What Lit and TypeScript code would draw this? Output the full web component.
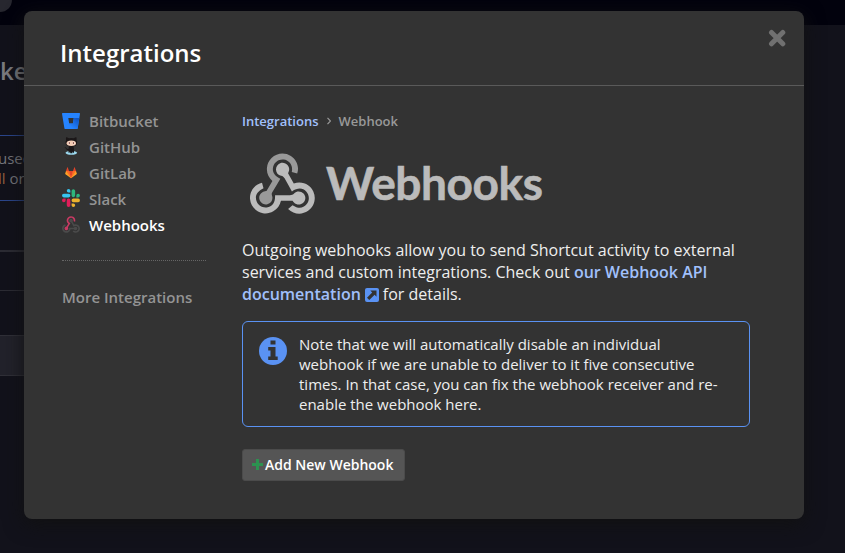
import { LitElement, html, css, svg } from "lit";
import { customElement, property } from "lit/decorators.js";

const hookTop =
  "M119.54 100.5C108.93 118.34 98.76 135.61 88.39 152.75C85.72 157.15 84.4 160.74 86.53 166.33C92.41 181.79 84.12 196.83 68.54 200.91C53.84 204.76 39.52 195.1 36.6 179.37C34.02 165.44 44.83 151.78 60.18 149.61C61.47 149.42 62.78 149.4 64.94 149.24L88.3 110.07C73.61 95.47 64.87 78.39 66.8 57.23C68.17 42.27 74.05 29.35 84.8 18.75C105.39 -1.54 136.81 -4.82 161.05 10.75C184.33 25.71 195 54.85 185.91 79.78L164.56 73.99C167.42 60.13 165.31 47.68 155.96 37.01C149.78 29.97 141.85 26.28 132.84 24.92C114.76 22.19 97.02 33.8 91.76 51.54C85.78 71.67 94.82 88.11 119.54 100.5Z";
const hookRight =
  "M149.84 79.41L172.43 119.25C210.45 107.48 239.11 128.53 249.4 151.06C261.82 178.28 253.33 210.52 228.93 227.31C203.89 244.55 172.23 241.61 150.04 219.46L167.45 204.9C189.36 219.09 208.53 218.42 222.75 201.61C234.89 187.28 234.62 165.9 222.14 151.86C207.73 135.67 188.43 135.17 165.1 150.72C155.43 133.55 145.58 116.52 136.21 99.23C133.05 93.4 129.56 90.02 122.44 88.79C110.55 86.73 102.87 76.51 102.41 65.07C101.96 53.75 108.62 43.52 119.04 39.54C129.36 35.59 141.48 38.78 148.42 47.55C154.09 54.72 155.9 62.79 152.91 71.64C152.08 74.1 151.01 76.49 149.84 79.41Z";
const hookLeft =
  "M167.71 187.21H121.94C117.55 205.25 108.07 219.82 91.75 229.09C79.05 236.29 65.37 238.73 50.81 236.38C24.01 232.05 2.09 207.92 .16 180.75C-2.03 149.96 19.13 122.6 47.33 116.45L53.2 137.72C27.32 150.92 18.36 167.55 25.61 188.35C31.98 206.66 50.09 216.69 69.75 212.81C89.83 208.85 99.96 192.16 98.72 165.38C117.76 165.38 136.81 165.18 155.85 165.48C163.28 165.59 169.02 164.82 174.62 158.27C183.84 147.48 200.81 148.46 210.74 158.64C220.89 169.05 220.4 185.8 209.66 195.77C199.3 205.39 182.93 204.87 173.24 194.51C171.25 192.37 169.68 189.84 167.71 187.21Z";

const hook = (top: string, right: string, left: string) => svg`
  <path fill=${top} d=${hookTop} />
  <path fill=${right} d=${hookRight} />
  <path fill=${left} d=${hookLeft} />`;

const icons = {
  bitbucket: html`<svg width="18" height="18" viewBox="0 -2 18 18">
    <defs><linearGradient id="bb" x1="1" y1=".2" x2=".4" y2=".8"><stop offset="0" stop-color="#0f55c4" /><stop offset="1" stop-color="#2684ff" /></linearGradient></defs>
    <path fill="#2684ff" fill-rule="evenodd" d="M.6 0H17.4Q18.1 0 18 .7L15.7 15.3Q15.6 16 14.9 16H3.200Q2.500 16 2.400 15.300L0 .7Q-.1 0 .6 0ZM6.300 5L7.200 10.500H10.900L11.800 5Z" />
    <path fill="url(#bb)" d="M17.300 5H11.800L10.900 10.500H7.200L2.700 15.800Q2.900 16 3.200 16H14.900Q15.600 16 15.700 15.300Z" />
  </svg>`,
  github: html`<svg width="18" height="18" viewBox="0 0 18 18">
    <ellipse cx="9.300" cy="15.800" rx="5.800" ry="2" fill="#9bd8ee" />
    <path fill="#1b1718" d="M4.300 0L7 1.200Q9.300.7 11.600 1.200L14.200 0Q15 1.800 14.500 3.300Q15.700 5 14.800 7.200Q13.900 9.300 11.400 9.500Q12.300 11 12 15.800H11L10.600 14.600L10.300 16.300H8.300L8 14.600L7.500 15.800H6.500V13.200Q4.500 13.300 3.600 11.300L2.500 10.400Q4.200 10.200 4.700 11.500Q5.500 12.200 6.600 11.800Q6.600 10.200 7.200 9.500Q4.700 9.200 3.900 7.200Q3 5 4.100 3.300Q3.600 1.800 4.300 0Z" />
    <ellipse cx="9.300" cy="6.200" rx="4.700" ry="2.700" fill="#f4cbb2" />
    <ellipse cx="7.200" cy="6" rx="1" ry="1.500" fill="#fff" /><ellipse cx="11.500" cy="6" rx="1" ry="1.500" fill="#fff" />
    <ellipse cx="7.300" cy="6.100" rx=".7" ry="1.100" fill="#8b4c40" /><ellipse cx="11.400" cy="6.100" rx=".7" ry="1.100" fill="#8b4c40" />
  </svg>`,
  gitlab: html`<svg width="18" height="18" viewBox="0 0 18 18">
    <path fill="#fca326" d="M4 8L3.200 10.500Q3.100 11 3.500 11.300L9 15.300L14.500 11.300Q14.900 11 14.800 10.500L14 8Z" />
    <path fill="#fc6d26" d="M4 8L9 15.300L14 8H11.100L9 14.300L6.900 8Z" />
    <path fill="#e24329" d="M4 8L5.300 4.300Q5.500 4 5.700 4.300L7 8H11L12.300 4.300Q12.500 4 12.700 4.300L14 8H11L9 15.300L7 8Z" />
  </svg>`,
  slack: html`<svg width="18" height="18" viewBox="0 0 54 54">
    <path fill="#36c5f0" d="M19.700 0a5.400 5.400 0 0 0 0 10.800h5.400V5.400A5.400 5.400 0 0 0 19.700 0m0 14.400H5.400a5.400 5.400 0 0 0 0 10.800h14.300a5.400 5.400 0 0 0 0-10.800" />
    <path fill="#2eb67d" d="M53.800 19.800a5.400 5.400 0 0 0-10.800 0v5.400h5.400a5.400 5.400 0 0 0 5.400-5.400m-14.400 0V5.400a5.400 5.400 0 0 0-10.700 0v14.400a5.400 5.400 0 0 0 10.700 0" />
    <path fill="#ecb22e" d="M34.100 54a5.400 5.400 0 0 0 0-10.800h-5.400v5.400a5.400 5.400 0 0 0 5.400 5.400m0-14.400h14.300a5.400 5.400 0 0 0 0-10.800H34.100a5.400 5.400 0 0 0 0 10.800" />
    <path fill="#e01e5a" d="M0 34.200a5.400 5.400 0 0 0 10.800 0v-5.400H5.400A5.400 5.400 0 0 0 0 34.200m14.300 0v14.400a5.400 5.400 0 0 0 10.800 0V34.200a5.400 5.400 0 0 0-10.800 0" />
  </svg>`,
  webhooks: html`<svg width="18" height="17" viewBox="0 0 256 239">${hook("#c73a63", "#4b4b4b", "#4b4b4b")}</svg>`,
};

type IconName = keyof typeof icons;

@customElement("integration-link")
class IntegrationLink extends LitElement {
  @property() icon: IconName = "slack";
  @property() label = "";
  @property({ type: Boolean }) current = false;
  static styles = css`
    :host { display: block; height: 26px; }
    .link { display: flex; align-items: center; height: 26px; gap: 9px; color: #949494; font-size: 15px; font-weight: 600; }
    .current { color: #fff; }
    .icon { display: flex; align-items: center; width: 18px; height: 18px; margin-top: -2px; }
    .icon svg { display: block; }
  `;
  render() {
    return html`<div class="link ${this.current ? "current" : ""}">
      <span class="icon">${icons[this.icon]}</span><span>${this.label}</span>
    </div>`;
  }
}

@customElement("app-root")
class AppRoot extends LitElement {
  static styles = css`
    :host { display: block; position: relative; width: 845px; height: 553px; overflow: hidden; background: #12121b; font-family: "Open Sans", sans-serif; color: #eee; }
    .page { display: flex; flex-direction: column; height: 553px; }
    .page > :not(.topbar) { width: 400px; }
    .topbar { height: 25px; flex: none; background: #02020d; }
    .avatar { width: 24px; height: 24px; margin: -12px 0 0 -12px; border-radius: 50%; background: #27272f; }
    .crumb { height: 110px; box-sizing: border-box; padding-top: 29px; font-size: 24px; line-height: 34px; font-weight: 600; color: #7b7b7f; }
    .notice { height: 66px; box-sizing: border-box; border: solid #2b468c; border-width: 1px 0; padding-top: 12px; font-size: 15px; line-height: 20px; color: #77777d; white-space: nowrap; }
    .notice p { margin: 0 0 0 -2px; }
    .code { color: #93603f; }
    .rule { height: 41px; box-sizing: border-box; margin-top: 49px; border-top: 2px solid #2c2c34; border-bottom: 1px solid #2c2c34; }
    .row { height: 41px; box-sizing: border-box; margin-top: 44px; background: #22222b; border: solid #303038; border-width: 1px 0; }
    .dialog { position: absolute; left: 24px; top: 11px; width: 780px; height: 508px; display: flex; flex-direction: column; border-radius: 8px; background: #333; box-shadow: 0 5px 20px #111; }
    .header { display: flex; justify-content: space-between; height: 75px; flex: none; box-sizing: border-box; border-bottom: 1px solid #5a5a5a; padding: 18px 18px 0 36px; }
    h1 { margin: 7px 0 0; font-size: 24px; line-height: 34px; font-weight: 600; color: #fff; }
    .body { display: flex; gap: 36px; padding: 22px 54px 0 38px; }
    .side { width: 144px; flex: none; }
    .dots { height: 22px; border-bottom: 1px dotted #666; }
    .more { margin-top: 25px; color: #949494; font-size: 15px; line-height: 22px; font-weight: 600; }
    .main { width: 508px; }
    .path { display: flex; align-items: center; height: 26px; gap: 8px; font-size: 13px; font-weight: 600; color: #999; }
    a { color: #a1c0fb; font-weight: 600; }
    .logo { display: flex; align-items: flex-start; gap: 11px; height: 61px; margin: 19px 0 0 8px; font: 700 46px/59px Lato, sans-serif; letter-spacing: -.4px; color: #bbb; -webkit-text-stroke: .6px #bbb; }
    .logo svg { flex: none; }
    .intro { margin: 25px 0 0; font-size: 16px; line-height: 22px; white-space: nowrap; }
    .ext { vertical-align: -2px; margin: 0 4px 0 4px; }
    .note { display: flex; gap: 12px; box-sizing: border-box; height: 106px; margin-top: 16px; padding: 12px 16px; border: 1px solid #5a92f3; border-radius: 6px; font-size: 15px; line-height: 20px; white-space: nowrap; }
    .note svg { flex: none; margin-top: 3px; }
    .add { display: flex; align-items: center; gap: 2px; box-sizing: border-box; width: 163px; height: 32px; margin-top: 22px; padding: 0 9px; border: 1px solid #4b4b4b; border-radius: 3px; background: #555; color: #fff; font: 600 14px/20px "Open Sans", sans-serif; white-space: nowrap; }
    .add span { margin-top: -1px; }
    .add svg { flex: none; margin-top: -1px; }
  `;
  render() {
    return html`
      <div class="page">
        <div class="topbar"><div class="avatar"></div></div>
        <div class="crumb">ke</div>
        <div class="notice"><p>used</p><p><span class="code">ll</span> or</p></div>
        <div class="rule"></div>
        <div class="row"></div>
      </div>
      <section class="dialog">
        <header class="header">
          <h1>Integrations</h1>
          <svg width="18" height="18" viewBox="0 0 18 18"><path d="M3.500 3.500L14.800 14.800M14.800 3.500L3.500 14.800" stroke="#707070" stroke-width="5" stroke-linecap="round" /></svg>
        </header>
        <div class="body">
          <nav class="side">
            <integration-link icon="bitbucket" label="Bitbucket"></integration-link>
            <integration-link icon="github" label="GitHub"></integration-link>
            <integration-link icon="gitlab" label="GitLab"></integration-link>
            <integration-link icon="slack" label="Slack"></integration-link>
            <integration-link icon="webhooks" label="Webhooks" current></integration-link>
            <div class="dots"></div>
            <div class="more">More Integrations</div>
          </nav>
          <main class="main">
            <div class="path"><a>Integrations</a>
              <svg width="4" height="8" viewBox="0 0 4 8"><path d="M.5.8L3.500 4L.5 7.200" fill="none" stroke="#999" stroke-width="1.200" /></svg>
              <span>Webhook</span></div>
            <div class="logo"><svg width="65" height="61" viewBox="0 0 256 239" stroke="none">${hook("#999", "#bbb", "#bbb")}</svg><span>Webhooks</span></div>
            <p class="intro">Outgoing webhooks allow you to send Shortcut activity to external<br />services and custom integrations. Check out <a>our Webhook API<br />documentation</a><svg class="ext" width="14" height="14" viewBox="0 0 14 14"><rect width="14" height="14" rx="2" fill="#5a92f3" /><path fill="#333" d="M5.300 2.500H11.500V8.700L9.600 6.800L4.300 12L2 9.700L7.200 4.400Z" /></svg>for details.</p>
            <div class="note">
              <svg width="28" height="28" viewBox="0 0 28 28"><circle cx="14" cy="14" r="14" fill="#5a92f3" /><path fill="#333" d="M11.500 3.500H16.500V7.500H11.500ZM9.200 10H16.500V19.500H18.700V23H9.200V19.500H11.500V13.500H9.200Z" /></svg>
              <div>Note that we will automatically disable an individual<br />webhook if we are unable to deliver to it five consecutive<br />times. In that case, you can fix the webhook receiver and re-<br />enable the webhook here.</div>
            </div>
            <div class="add"><svg width="11" height="11" viewBox="0 0 11 11"><path d="M5.500 0V11M0 5.500H11" stroke="#2c9250" stroke-width="3" /></svg><span>Add New Webhook</span></div>
          </main>
        </div>
      </section>`;
  }
}
